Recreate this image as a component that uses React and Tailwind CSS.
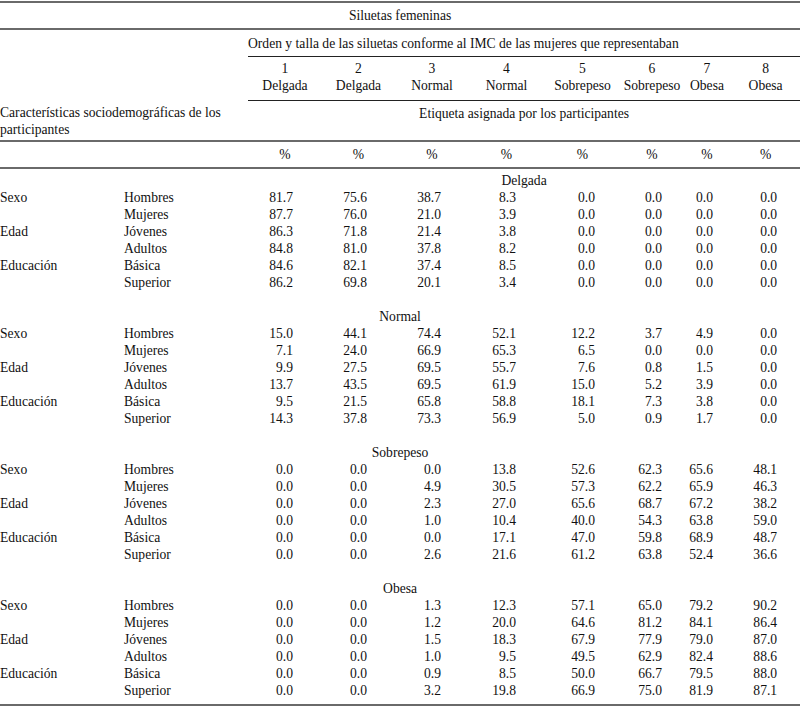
const sections = [
  {
    title: 'Delgada',
    wide: false,
    rows: [
      ['81.7', '75.6', '38.7', '8.3', '0.0', '0.0', '0.0', '0.0'],
      ['87.7', '76.0', '21.0', '3.9', '0.0', '0.0', '0.0', '0.0'],
      ['86.3', '71.8', '21.4', '3.8', '0.0', '0.0', '0.0', '0.0'],
      ['84.8', '81.0', '37.8', '8.2', '0.0', '0.0', '0.0', '0.0'],
      ['84.6', '82.1', '37.4', '8.5', '0.0', '0.0', '0.0', '0.0'],
      ['86.2', '69.8', '20.1', '3.4', '0.0', '0.0', '0.0', '0.0'],
    ],
  },
  {
    title: 'Normal',
    wide: true,
    rows: [
      ['15.0', '44.1', '74.4', '52.1', '12.2', '3.7', '4.9', '0.0'],
      ['7.1', '24.0', '66.9', '65.3', '6.5', '0.0', '0.0', '0.0'],
      ['9.9', '27.5', '69.5', '55.7', '7.6', '0.8', '1.5', '0.0'],
      ['13.7', '43.5', '69.5', '61.9', '15.0', '5.2', '3.9', '0.0'],
      ['9.5', '21.5', '65.8', '58.8', '18.1', '7.3', '3.8', '0.0'],
      ['14.3', '37.8', '73.3', '56.9', '5.0', '0.9', '1.7', '0.0'],
    ],
  },
  {
    title: 'Sobrepeso',
    wide: true,
    rows: [
      ['0.0', '0.0', '0.0', '13.8', '52.6', '62.3', '65.6', '48.1'],
      ['0.0', '0.0', '4.9', '30.5', '57.3', '62.2', '65.9', '46.3'],
      ['0.0', '0.0', '2.3', '27.0', '65.6', '68.7', '67.2', '38.2'],
      ['0.0', '0.0', '1.0', '10.4', '40.0', '54.3', '63.8', '59.0'],
      ['0.0', '0.0', '0.0', '17.1', '47.0', '59.8', '68.9', '48.7'],
      ['0.0', '0.0', '2.6', '21.6', '61.2', '63.8', '52.4', '36.6'],
    ],
  },
  {
    title: 'Obesa',
    wide: true,
    rows: [
      ['0.0', '0.0', '1.3', '12.3', '57.1', '65.0', '79.2', '90.2'],
      ['0.0', '0.0', '1.2', '20.0', '64.6', '81.2', '84.1', '86.4'],
      ['0.0', '0.0', '1.5', '18.3', '67.9', '77.9', '79.0', '87.0'],
      ['0.0', '0.0', '1.0', '9.5', '49.5', '62.9', '82.4', '88.6'],
      ['0.0', '0.0', '0.9', '8.5', '50.0', '66.7', '79.5', '88.0'],
      ['0.0', '0.0', '3.2', '19.8', '66.9', '75.0', '81.9', '87.1'],
    ],
  },
];

// group label shown on first row of each pair
const labels = [
  ['Sexo', 'Hombres'],
  ['', 'Mujeres'],
  ['Edad', 'Jóvenes'],
  ['', 'Adultos'],
  ['Educación', 'Básica'],
  ['', 'Superior'],
];

const silhouettes = [
  ['1', 'Delgada'],
  ['2', 'Delgada'],
  ['3', 'Normal'],
  ['4', 'Normal'],
  ['5', 'Sobrepeso'],
  ['6', 'Sobrepeso'],
  ['7', 'Obesa'],
  ['8', 'Obesa'],
];

const colWidths = ['w-[124px]', 'w-[124px]', 'w-[74px]', 'w-[73px]', 'w-[74px]', 'w-[75px]', 'w-[77px]', 'w-[62px]', 'w-[48px]', 'w-[69px]'];

// right padding so the numbers line up like the printed table
const numPad = ['pr-[29px]', 'pr-[28px]', 'pr-[28px]', 'pr-[28px]', 'pr-[26px]', 'pr-[21px]', 'pr-[18px]', 'pr-[23px]'];

const thick = 'border-b-2 border-[#6a6a6a]';
const thin = 'border-b border-[#222]';

const App = () => {
  return (
    <div className="w-[800px] bg-white pt-px text-[13.6px] leading-[17px] text-[#111] font-['Liberation_Serif','Times_New_Roman',serif]">
      <table className="w-[800px] table-fixed border-separate border-spacing-0">
        <colgroup>
          {colWidths.map((w, i) => (
            <col key={i} className={w} />
          ))}
        </colgroup>
        <thead>
          <tr>
            <th colSpan={10} className="border-t-2 border-b-2 border-[#6a6a6a] p-0 h-[29px] text-center font-normal align-middle">
              Siluetas femeninas
            </th>
          </tr>
          <tr>
            <th colSpan={2} rowSpan={3} className={`${thick} p-0 pb-[2px] text-left font-normal align-bottom`}>
              Características sociodemográficas de los participantes
            </th>
            <th colSpan={8} className={`${thin} p-0 h-[27px] text-left font-normal align-middle`}>
              Orden y talla de las siluetas conforme al IMC de las mujeres que representaban
            </th>
          </tr>
          <tr>
            {silhouettes.map(([n, name]) => (
              <th key={n} className={`${thin} p-0 pt-[3px] h-[44px] text-center font-normal align-top`}>
                <div>{n}</div>
                <div>{name}</div>
              </th>
            ))}
          </tr>
          <tr>
            <th colSpan={8} className={`${thick} p-0 pt-[4px] h-[41px] text-center font-normal align-top`}>
              Etiqueta asignada por los participantes
            </th>
          </tr>
          <tr>
            <th colSpan={2} className={`${thick} p-0 h-[27px]`} />
            {silhouettes.map(([n]) => (
              <th key={n} className={`${thick} p-0 pb-px h-[27px] text-center font-normal align-middle`}>
                %
              </th>
            ))}
          </tr>
        </thead>
        <tbody>
          <tr>
            <td colSpan={10} className="p-0 h-[3px]" />
          </tr>
          {sections.map((section, si) => (
            <SectionRows key={section.title} section={section} last={si === sections.length - 1} />
          ))}
          <tr>
            <td colSpan={10} className={`${thick} p-0 h-[7px]`} />
          </tr>
        </tbody>
      </table>
    </div>
  );
};

const SectionRows = ({ section, last }) => (
  <>
    <tr>
      {section.wide ? (
        <td colSpan={10} className="p-0 h-[17px] text-center">
          {section.title}
        </td>
      ) : (
        <>
          <td colSpan={2} className="p-0 h-[17px]" />
          <td colSpan={8} className="p-0 h-[17px] text-center">
            {section.title}
          </td>
        </>
      )}
    </tr>
    {section.rows.map((values, ri) => (
      <tr key={ri}>
        <td className="p-0 h-[17px] whitespace-nowrap">{labels[ri][0]}</td>
        <td className="p-0 h-[17px] whitespace-nowrap">{labels[ri][1]}</td>
        {values.map((v, ci) => (
          <td key={ci} className={`p-0 h-[17px] text-right ${numPad[ci]}`}>
            {v}
          </td>
        ))}
      </tr>
    ))}
    {!last && (
      <tr>
        <td colSpan={10} className="p-0 h-[17px]" />
      </tr>
    )}
  </>
);

export default App;
